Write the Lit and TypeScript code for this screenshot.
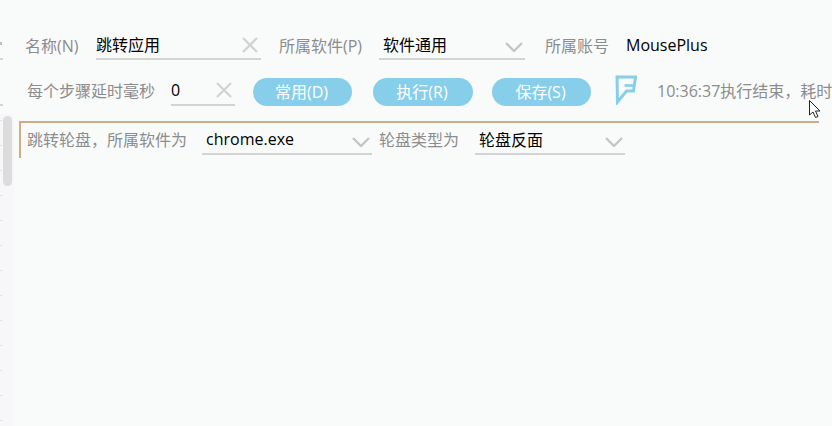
import { LitElement, html, css } from "lit";
import { customElement } from "lit/decorators.js";

const cross = html`<svg class="cross" width="16" height="16" viewBox="0 0 16 16"><path d="M1 1 L15 15 M15 1 L1 15" fill="none" stroke="#d2d4d4" stroke-width="2.4"/></svg>`;
const chev = html`<svg class="chev" width="18" height="10" viewBox="0 0 18 10"><path d="M1 1 L9 9 L17 1" fill="none" stroke="#c4c6c6" stroke-width="2.4"/></svg>`;

@customElement("app-root")
export class AppRoot extends LitElement {
  static styles = css`
    :host {
      display: grid;
      grid-template-columns: 14px 1fr;
      width: 832px;
      height: 426px;
      overflow: hidden;
      background: #f9fbfb;
      font-family: "Open Sans", "Noto Sans CJK SC", sans-serif;
      font-size: 16px;
      color: #8c8c8c;
      position: relative;
    }
    .side { display: flex; flex-direction: column; }
    .top { height: 114px; flex: none; overflow: hidden; }
    .tick { width: 3px; height: 2px; background: #d4d6d6; margin-top: 13px; }
    .tick.dot { margin-top: 42px; width: 2px; height: 3px; background: #bdbfbf; }
    .tick.wide { margin-top: 44px; }
    .rail {
      flex: 1;
      padding: 2px 2px 0 3px;
      background-color: #f7f6f8;
      background-image: repeating-linear-gradient(to bottom, #dbe1f2 0 1px, transparent 1px 25px);
      background-size: 2px 100%;
      background-repeat: no-repeat;
      background-position: 0 6px;
    }
    .thumb { width: 9px; height: 70px; border-radius: 5px; background: #dcdcdc; }
    .main { padding: 32px 0 0 11px; display: flex; flex-direction: column; min-width: 0; }
    .row { display: flex; align-items: flex-start; white-space: nowrap; }
    .r2 { margin-top: 18px; padding-left: 2px; }
    .label { flex: none; height: 28px; line-height: 28px; }
    .r2 .label, .card .label { line-height: 26px; }
    .field {
      flex: none; box-sizing: border-box;
      display: flex; align-items: center; justify-content: space-between;
      height: 28px; padding-bottom: 2px; border-bottom: 2px solid #d2d4d4; color: #000;
    }
    .plain { border-bottom: 0; }
    .pad { padding-left: 4px; padding-right: 2px; }
    .cross { margin: 2px 3px 0 0; }
    .r2 .cross { margin-top: 0; }
    .chev { margin-top: 5px; }
    .btn {
      flex: none; box-sizing: border-box; height: 28px; line-height: 28px; text-align: center;
      padding-right: 2px;
      border-radius: 14px; background: #87ceeb; color: #fff;
    }
    .card {
      margin: 15px 0 0 -6px; width: 800px; height: 37px; flex: none;
      border-top: 2px solid #d0ad85; border-left: 2px solid #d0ad85;
      display: flex; align-items: flex-start; padding: 4px 0 0 6px; box-sizing: border-box; white-space: nowrap;
    }
    .w-name { width: 71px; }
    .w-name-f { width: 165px; }
    .w-soft { width: 100px; margin-left: 18px; }
    .w-soft-f { width: 146px; }
    .w-acc { width: 81px; margin-left: 20px; }
    .w-delay { width: 144px; }
    .w-delay-f { width: 64px; }
    .b1 { width: 99px; margin-left: 18px; }
    .b2 { width: 100px; margin-left: 21px; }
    .b3 { width: 99px; margin-left: 19px; }
    .logo { display: block; flex: none; margin: -3px 0 0 24px; }
    .msg { margin-left: 20px; }
    .w-jump { width: 175px; }
    .w-jump-f { width: 170px; }
    .w-type { width: 96px; margin-left: 7px; }
    .w-type-f { width: 150px; }
    .cursor { position: absolute; left: 808px; top: 99px; }
  `;

  render() {
    return html`
      <div class="side">
        <div class="top">
          <div class="tick dot"></div>
          <div class="tick"></div>
          <div class="tick wide"></div>
        </div>
        <div class="rail"><div class="thumb"></div></div>
      </div>
      <div class="main">
        <div class="row">
          <span class="label w-name">名称(N)</span>
          <div class="field w-name-f">跳转应用 ${cross}</div>
          <span class="label w-soft">所属软件(P)</span>
          <div class="field pad w-soft-f">软件通用 ${chev}</div>
          <span class="label w-acc">所属账号</span>
          <div class="field plain">MousePlus</div>
        </div>
        <div class="row r2">
          <span class="label w-delay">每个步骤延时毫秒</span>
          <div class="field w-delay-f">0 ${cross}</div>
          <div class="btn b1">常用(D)</div>
          <div class="btn b2">执行(R)</div>
          <div class="btn b3">保存(S)</div>
          <svg class="logo" width="22" height="30" viewBox="0 0 22 30"><path d="M2 2 H20.5 L18.5 16 H11.5 L2.5 27 Z" fill="none" stroke="#87ceeb" stroke-width="3"/><path d="M9.5 10.5 H20" fill="none" stroke="#87ceeb" stroke-width="2.7"/></svg>
          <span class="label msg">10:36:37执行结束，耗时200ms</span>
        </div>
        <div class="card">
          <span class="label w-jump">跳转轮盘，所属软件为</span>
          <div class="field pad w-jump-f">chrome.exe ${chev}</div>
          <span class="label w-type">轮盘类型为</span>
          <div class="field pad w-type-f">轮盘反面 ${chev}</div>
        </div>
      </div>
      <svg class="cursor" width="14" height="20" viewBox="0 0 14 20"><path d="M1.5 1.5 V16 L5 13 L7.5 18.5 L10 17.5 L7.5 12 H12 Z" fill="#fff" stroke="#222" stroke-width="1"/></svg>
    `;
  }
}
